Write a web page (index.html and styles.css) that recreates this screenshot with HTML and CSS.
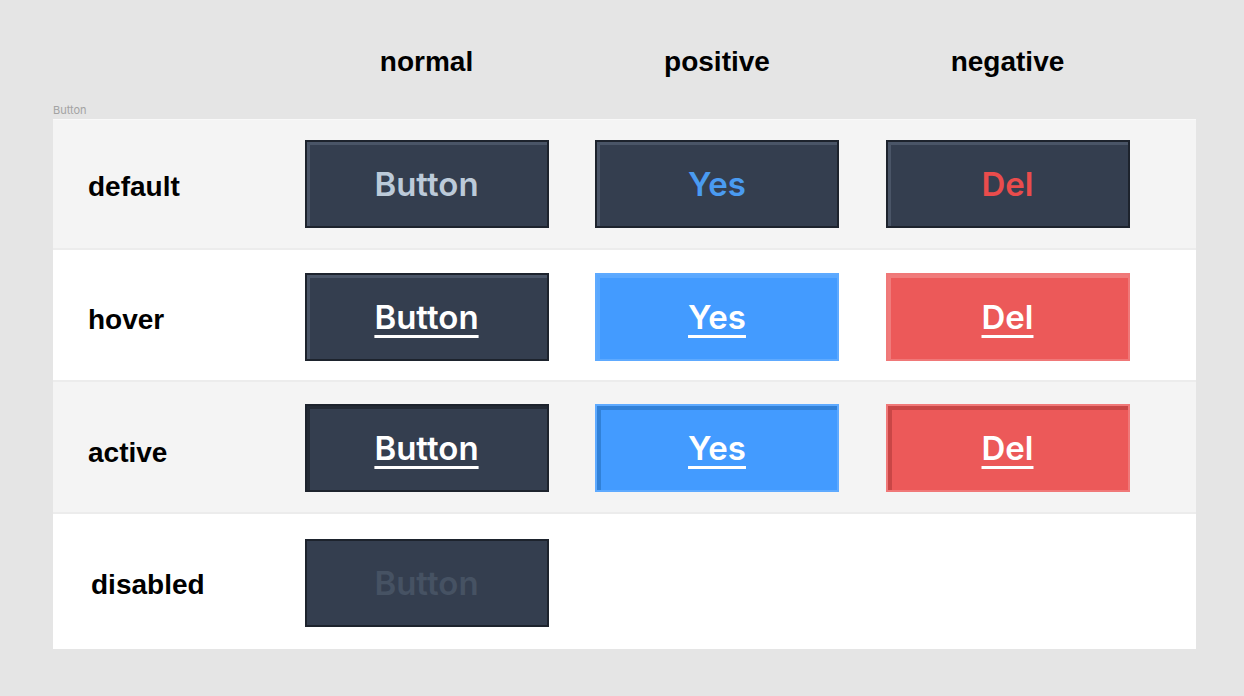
FILE: index.html
```html
<!DOCTYPE html>
<html>
<head>
<meta charset="utf-8">
<link rel="stylesheet" href="styles.css">
</head>
<body>
<div class="page">
  <div class="heads">
    <div class="head-spacer"></div>
    <div class="head">normal</div>
    <div class="head">positive</div>
    <div class="head">negative</div>
  </div>
  <div class="frame-label">Button</div>
  <div class="panel">
    <div class="row row-grey row-1">
      <div class="label">default</div>
      <div class="btn dark">Button</div>
      <div class="btn dark blue-text">Yes</div>
      <div class="btn dark red-text">Del</div>
    </div>
    <div class="row row-white row-2">
      <div class="label">hover</div>
      <div class="btn dark hover"><span class="u">Button</span></div>
      <div class="btn blue hover"><span class="u">Yes</span></div>
      <div class="btn red hover"><span class="u">Del</span></div>
    </div>
    <div class="row row-grey row-3">
      <div class="label label-active">active</div>
      <div class="btn dark active"><span class="u">Button</span></div>
      <div class="btn blue active"><span class="u">Yes</span></div>
      <div class="btn red active"><span class="u">Del</span></div>
    </div>
    <div class="row row-white row-last">
      <div class="label label-disabled">disabled</div>
      <div class="btn dark disabled">Button</div>
    </div>
  </div>
</div>
</body>
</html>
```
FILE: styles.css
```css
* { box-sizing: border-box; }
html, body { margin: 0; padding: 0; }
body {
  background: #e5e5e5;
  width: 1244px;
  height: 696px;
  overflow: hidden;
  font-family: "Liberation Sans", Arial, sans-serif;
}
.page {
  padding-left: 53px;
  width: 1196px;
}
.heads {
  display: grid;
  grid-template-columns: 205px 244px 244px 244px;
  column-gap: 46.5px;
  height: 100px;
  align-items: center;
  padding-top: 24px;
}
.head {
  font-size: 28px;
  font-weight: 700;
  color: #000;
  text-align: center;
  line-height: 30px;
}
.frame-label {
  font-family: Inter, "Liberation Sans", sans-serif;
  font-size: 11px;
  color: #a3a3a3;
  line-height: 14px;
  height: 19px;
  padding-top: 3px;
}
.panel {
  width: 1143px;
  display: flex;
  flex-direction: column;
}
.row {
  display: grid;
  grid-template-columns: 205px 244px 244px 244px;
  column-gap: 46.5px;
  align-items: center;
  height: 132px;
  border-bottom: 2px solid #ececec;
}
.row-1 { height: 131px; box-shadow: inset 0 1px 0 #f9f9f9; }
.row-2 { padding-top: 4px; }
.row-3 { padding-top: 1px; }
.row-last { border-bottom: none; height: 135px; padding-top: 3px; }
.row-grey { background: #f4f4f4; }
.row-white { background: #ffffff; }
.label {
  padding-left: 35px;
  padding-top: 6px;
  font-size: 28px;
  font-weight: 700;
  color: #000;
}
.label-active { padding-top: 11px; }
.label-disabled { padding-left: 38px; padding-top: 4px; }
.btn {
  height: 88px;
  display: flex;
  align-items: center;
  justify-content: center;
  font-family: Inter, "Liberation Sans", sans-serif;
  font-size: 33px;
  font-weight: 600;
  border: 2px solid #1d232d;
}
.dark {
  background: #343e4f;
  color: #bccad9;
  box-shadow: inset 3px 3px 0 #4a5567;
}
.blue-text { color: #4a9bf1; }
.red-text { color: #ea4c4c; }
.hover { color: #ffffff; }
.u {
  text-decoration: underline;
  text-decoration-thickness: 3px;
  text-underline-offset: 6px;
}
.blue {
  background: #439bff;
  border-color: #5eaaff;
}
.blue.hover { box-shadow: inset 3px 3px 0 #5aa8ff; }
.red {
  background: #ec5959;
  border-color: #f07878;
}
.red.hover { box-shadow: inset 3px 3px 0 #f07b7b; }
.dark.active {
  color: #ffffff;
  box-shadow: inset 3px 3px 0 #232a35;
}
.blue.active { color: #fff; box-shadow: inset 4px 4px 0 #3181d8; }
.red.active { color: #fff; box-shadow: inset 4px 4px 0 #c94646; }
.dark.disabled {
  color: #465263;
  box-shadow: none;
}
```
